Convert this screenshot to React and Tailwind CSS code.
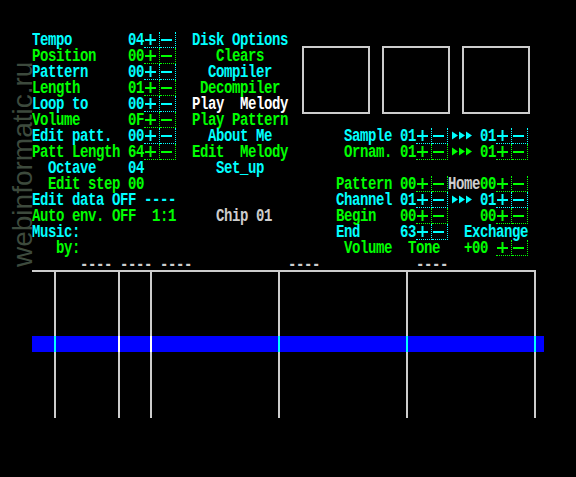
import React from "react";

const CY = "text-[#00ffff]";
const GR = "text-[#00ff00]";
const WH = "text-white";
const GY = "text-[#cdcdcd]";
const BCY = "border-[#00ffff]";
const BGR = "border-[#00ff00]";

const sp = (n) => " ".repeat(n);

function S({ c, children }) {
  return (
    <span className={`inline-block shrink-0 whitespace-pre leading-3 scale-y-[1.3] ${c}`}>
      {children}
    </span>
  );
}

function W({ g }) {
  const b = g ? BGR : BCY;
  const f = g ? GR : CY;
  return (
    <span className="inline-flex h-4 w-8 shrink-0">
      <span className={`block h-4 w-4 border-r border-b border-dotted ${b}`}>
        <svg width="15" height="15" viewBox="0 0 15 15" className={`block ${f}`}>
          <rect x="1" y="7" width="11" height="2" fill="currentColor" />
          <rect x="5.5" y="2" width="2" height="11" fill="currentColor" />
        </svg>
      </span>
      <span className={`block h-4 w-4 border-r border-b border-dotted ${b}`}>
        <svg width="15" height="15" viewBox="0 0 15 15" className={`block ${f}`}>
          <rect x="1" y="7" width="11" height="2" fill="currentColor" />
        </svg>
      </span>
    </span>
  );
}

function Arr({ g }) {
  return (
    <svg width="24" height="16" viewBox="0 0 24 16" className={`block shrink-0 ${g ? GR : CY}`}>
      <path d="M4 3.5v8l6-4z M11 3.5v8l6-4z M18 3.5v8l6-4z" fill="currentColor" />
    </svg>
  );
}

function Row({ children }) {
  return <div className="flex h-4 items-center">{children}</div>;
}

function Col({ w, b }) {
  return <div className={`h-full shrink-0 border-r-2 ${w} ${b}`} />;
}

export default function App() {
  return (
    <div className="relative h-[477px] w-[576px] overflow-hidden bg-black">
      <div className="pl-8 pt-8 font-['Liberation_Mono',monospace] text-[14px] font-bold leading-4 tracking-[-0.4px]">
        {/* top block */}
        <div className="flex">
          <div className="flex w-[256px] flex-col">
            <Row>
              <S c={CY}>{"Tempo       04"}</S>
              <W />
              <S c={CY}>{"  Disk Options"}</S>
            </Row>
            <Row>
              <S c={GR}>{"Position    00"}</S>
              <W g />
              <S c={GR}>{"     Clears"}</S>
            </Row>
            <Row>
              <S c={CY}>{"Pattern     00"}</S>
              <W />
              <S c={CY}>{"    Compiler"}</S>
            </Row>
            <Row>
              <S c={GR}>{"Length      01"}</S>
              <W g />
              <S c={GR}>{"   Decompiler"}</S>
            </Row>
            <Row>
              <S c={CY}>{"Loop to     00"}</S>
              <W />
              <S c={WH}>{"  Play  Melody"}</S>
            </Row>
            <Row>
              <S c={GR}>{"Volume      0F"}</S>
              <W g />
              <S c={GR}>{"  Play Pattern"}</S>
            </Row>
          </div>
          <div className="flex gap-3 pl-[14px] pt-[14px]">
            <div className="h-[68px] w-[68px] border-2 border-[#cdcdcd]" />
            <div className="h-[68px] w-[68px] border-2 border-[#cdcdcd]" />
            <div className="h-[68px] w-[68px] border-2 border-[#cdcdcd]" />
          </div>
        </div>

        <Row>
          <S c={CY}>{"Edit patt.  00"}</S>
          <W />
          <S c={CY}>{"    About Me" + sp(9) + "Sample 01"}</S>
          <W />
          <Arr />
          <S c={CY}>{" 01"}</S>
          <W />
        </Row>
        <Row>
          <S c={GR}>{"Patt Length 64"}</S>
          <W g />
          <S c={GR}>{"  Edit  Melody" + sp(7) + "Ornam. 01"}</S>
          <W g />
          <Arr g />
          <S c={GR}>{" 01"}</S>
          <W g />
        </Row>
        <Row>
          <S c={CY}>{"  Octave    04" + sp(9) + "Set_up"}</S>
        </Row>
        <Row>
          <S c={GR}>{"  Edit step 00" + sp(24) + "Pattern 00"}</S>
          <W g />
          <S c={GY}>{"Home"}</S>
          <S c={GR}>{"00"}</S>
          <W g />
        </Row>
        <Row>
          <S c={CY}>{"Edit data OFF ----" + sp(20) + "Channel 01"}</S>
          <W />
          <Arr />
          <S c={CY}>{" 01"}</S>
          <W />
        </Row>
        <Row>
          <S c={GR}>{"Auto env. OFF  1:1" + sp(5)}</S>
          <S c={GY}>{"Chip 01"}</S>
          <S c={GR}>{sp(8) + "Begin   00"}</S>
          <W g />
          <S c={GR}>{"    00"}</S>
          <W g />
        </Row>
        <Row>
          <S c={CY}>{"Music:" + sp(32) + "End     63"}</S>
          <W />
          <S c={CY}>{"  Exchange"}</S>
        </Row>
        <Row>
          <S c={GR}>{"   by:" + sp(33) + "Volume  Tone   +00 "}</S>
          <W g />
        </Row>
        <div className="flex h-[14px] items-start pt-[3px]">
          <S c={GY}>{sp(6) + "---- ---- ----" + sp(12) + "----" + sp(12) + "----"}</S>
        </div>

        {/* pattern area */}
        <div className="w-[504px] border-t-2 border-[#cdcdcd]">
          <div className="flex h-16">
            <Col w="w-[24px]" b="border-[#cdcdcd]" />
            <Col w="w-16" b="border-[#cdcdcd]" />
            <Col w="w-8" b="border-[#cdcdcd]" />
            <Col w="w-32" b="border-[#cdcdcd]" />
            <Col w="w-32" b="border-[#cdcdcd]" />
            <Col w="w-32" b="border-[#cdcdcd]" />
          </div>
          <div className="flex h-4 w-[512px] bg-[#0000ff]">
            <Col w="w-[24px]" b="border-[#00ffff]" />
            <Col w="w-16" b="border-white" />
            <Col w="w-8" b="border-white" />
            <Col w="w-32" b="border-[#00ffff]" />
            <Col w="w-32" b="border-[#00ffff]" />
            <Col w="w-32" b="border-[#00ffff]" />
          </div>
          <div className="flex h-[66px]">
            <Col w="w-[24px]" b="border-[#cdcdcd]" />
            <Col w="w-16" b="border-[#cdcdcd]" />
            <Col w="w-8" b="border-[#cdcdcd]" />
            <Col w="w-32" b="border-[#cdcdcd]" />
            <Col w="w-32" b="border-[#cdcdcd]" />
            <Col w="w-32" b="border-[#cdcdcd]" />
          </div>
        </div>
      </div>

      {/* watermark */}
      <div className="absolute left-[9px] top-[267px] origin-top-left -rotate-90 whitespace-nowrap font-['Liberation_Sans',sans-serif] text-[28px] leading-none text-[#3d4a3d]">
        webinformatic.ru
      </div>
    </div>
  );
}
